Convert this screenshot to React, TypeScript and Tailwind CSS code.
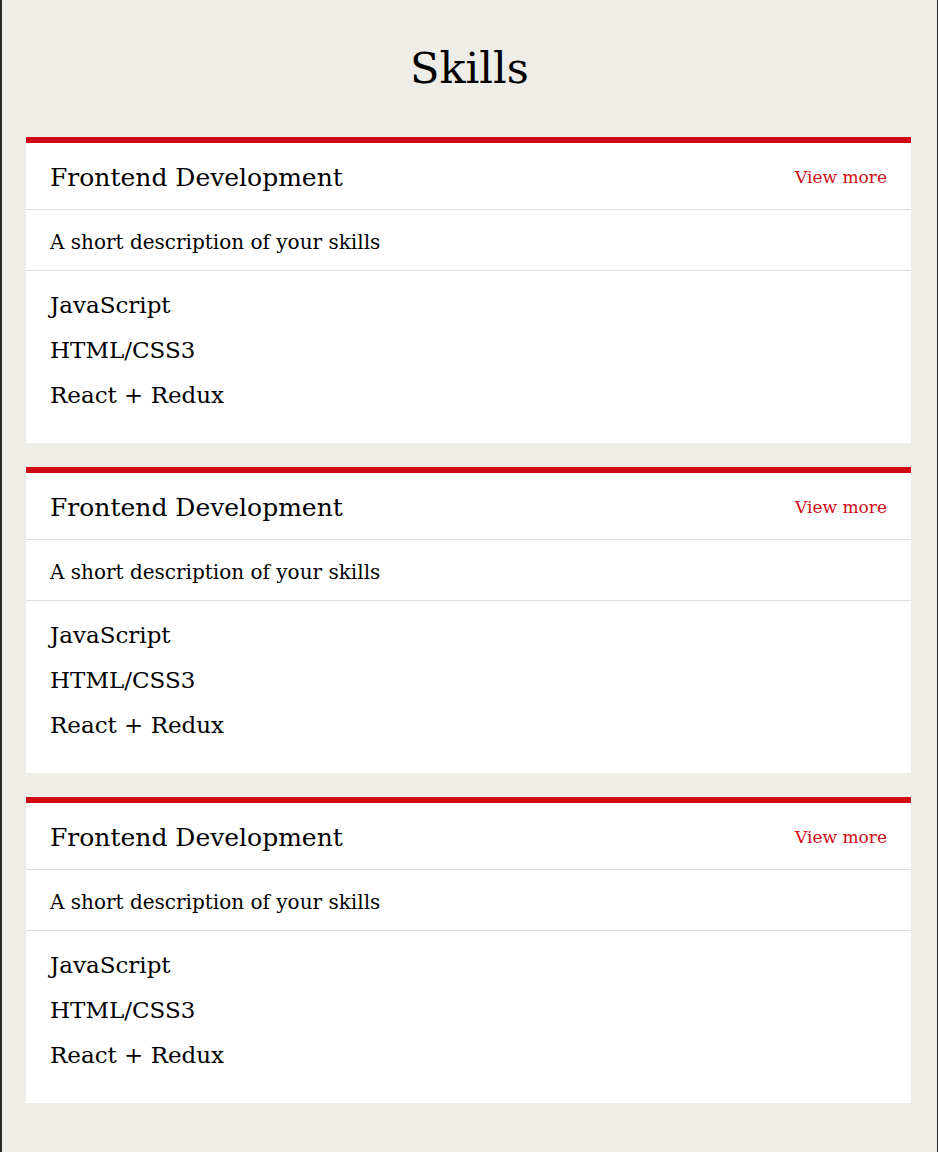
import React from "react";

const items = ["JavaScript", "HTML/CSS3", "React + Redux"];

function Card() {
  return (
    <div className="bg-white border-t-[6px] border-[#d00a15] mb-[24px] ml-[24px] w-[885px]">
      <div className="flex items-center justify-between h-[67px] px-[24px] pt-[4px] border-b border-[#e0e0e0]">
        <span className="text-[25px] text-black">Frontend Development</span>
        <span className="text-[17px] text-[#d00a15]">View more</span>
      </div>
      <div className="flex items-center h-[61px] px-[24px] pt-[4px] border-b border-[#e0e0e0]">
        <span className="text-[20px] text-black">A short description of your skills</span>
      </div>
      <ul className="px-[24px] pt-[12px] pb-[25px]">
        {items.map((t) => (
          <li key={t} className="text-[23px] leading-[45px] text-black">
            {t}
          </li>
        ))}
      </ul>
    </div>
  );
}

export default function App() {
  return (
    <div
      className="min-h-[1152px] bg-[#eeede8] border-l-2 border-r border-[#2b2b2b]"
      style={{ fontFamily: '"DejaVu Serif", serif' }}
    >
      <h1 className="text-center text-[43px] leading-[53px] pt-[42px] pb-[42px] text-black">Skills</h1>
      <Card />
      <Card />
      <Card />
    </div>
  );
}
